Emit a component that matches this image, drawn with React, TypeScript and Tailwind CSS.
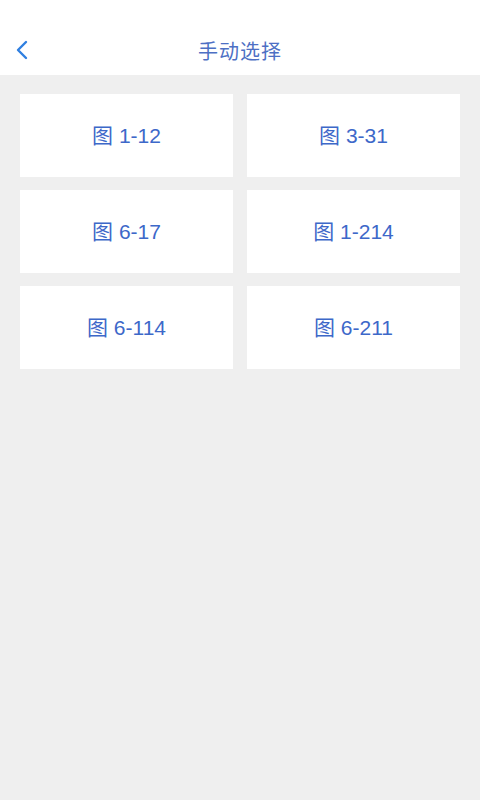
const items = ['1-12', '3-31', '6-17', '1-214', '6-114', '6-211'];

export default function App() {
  return (
    <div
      className="w-[480px] h-[800px] bg-[#efefef] flex flex-col"
      style={{ fontFamily: '"Liberation Sans", "Noto Sans CJK SC", sans-serif' }}
    >
      {/* header */}
      <div className="relative h-[75px] bg-white flex items-end justify-center pb-[13px]">
        <button className="absolute left-[14px] bottom-[14px] p-0">
          <svg width="16" height="22" viewBox="0 0 16 22" fill="none">
            <path d="M12 3L4 11l8 8" stroke="#2f7fe0" strokeWidth="2.4" strokeLinecap="round" strokeLinejoin="round" />
          </svg>
        </button>
        <h1 className="text-[20px] text-[#4d6fc4] leading-none tracking-[1px]">手动选择</h1>
      </div>

      {/* grid */}
      <div className="grid grid-cols-2 gap-x-[14px] gap-y-[13px] px-[20px] pt-[19px]">
        {items.map((it) => (
          <div key={it} className="h-[83px] bg-white flex items-center justify-center">
            <span className="text-[21px] text-[#3d68c9]">图 {it}</span>
          </div>
        ))}
      </div>
    </div>
  );
}
